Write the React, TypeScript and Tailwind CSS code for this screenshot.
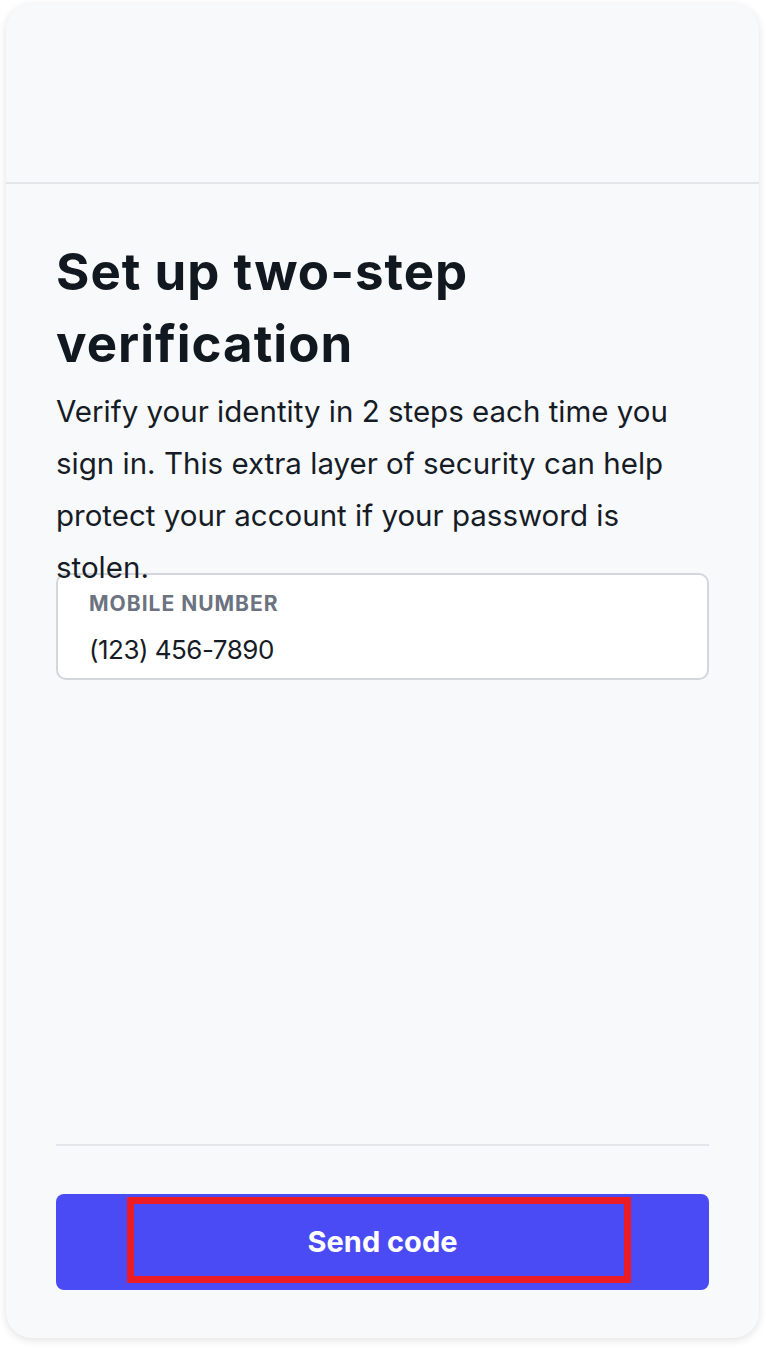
import React from "react";

export default function App() {
  return (
    <div className="min-h-screen bg-white p-[6px] pt-[4px] font-['Inter',sans-serif]">
      <div className="h-[1334px] w-[753px] rounded-[26px] bg-[#f8f9fb] shadow-[0_2px_8px_rgba(0,0,0,0.12)] flex flex-col overflow-hidden">
        {/* Top bar */}
        <div className="h-[180px] shrink-0 border-b-2 border-[#e3e5e9]" />

        {/* Body */}
        <div className="flex-1 flex flex-col px-[50px] pt-[52px]">
          <h1 className="text-[51px] leading-[72px] font-bold text-[#111820] tracking-[1px]">
            Set up two-step verification
          </h1>
          <p className="relative z-10 mt-[5px] text-[29.5px] leading-[52px] text-[#161c26] pr-[30px]">
            Verify your identity in 2 steps each time you sign in. This extra layer of security can help protect your account if your password is stolen.
          </p>

          <div className="relative -mt-[20px] h-[107px] rounded-[10px] border-2 border-[#d3d6dc] bg-white px-[31px] pt-[15px]">
            <div className="text-[21px] leading-[28px] font-bold uppercase tracking-[1px] text-[#6b7280]">
              Mobile number
            </div>
            <div className="mt-[16px] text-[26px] leading-[32px] tracking-[-0.5px] text-[#161c26]">(123) 456-7890</div>
          </div>

          <div className="flex-1" />

          <div className="border-t-2 border-[#e3e5e9]" />

          <div className="mt-[48px] mb-[48px] relative">
            <button className="w-full h-[96px] rounded-[8px] bg-[#4b4bf5] text-white text-[29px] font-bold">
              Send code
            </button>
            <div className="absolute left-[71px] top-[3px] w-[504px] h-[86px] border-[7px] border-[#ed1c24] pointer-events-none" />
          </div>
        </div>
      </div>
    </div>
  );
}
